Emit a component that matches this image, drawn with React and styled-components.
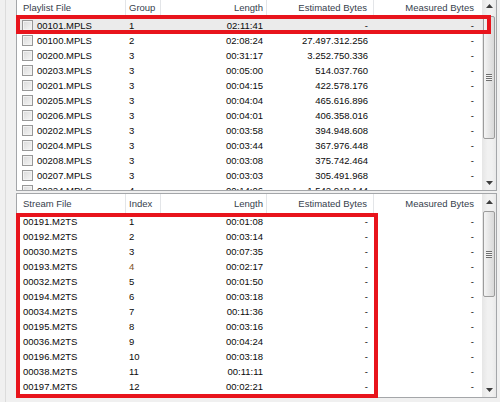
import React from 'react';
import styled, { createGlobalStyle } from 'styled-components';

const GlobalStyle = createGlobalStyle`
  html, body { margin: 0; padding: 0; background: #f0f0f0; }
  body {
    width: 500px; height: 402px; overflow: hidden;
    font-family: "Liberation Sans", Arial, sans-serif;
    font-size: 9.5px;
    color: #0a0a0a;
  }
  * { box-sizing: border-box; }
`;

const Frame = styled.div`
  margin-left: 5px;
  margin-top: -3px;
  border-left: 1px solid #dcdcdc;
  padding-left: 10px;
  padding-right: 3px;
  height: 410px;
  display: flex;
  flex-direction: column;
  gap: 2px;
`;

const ListView = styled.div`
  position: relative;
  flex: none;
  height: ${p => p.$h}px;
  border: 1px solid #a4a6a9;
  background: #fff;
  display: flex;
`;

const Body = styled.div`
  flex: 1;
  min-width: 0;
  overflow: hidden;
  display: flex;
  flex-direction: column;
`;

const GRID = '109px 35px 106px 107px 1fr';

const HeaderRow = styled.div`
  flex: none;
  display: grid;
  grid-template-columns: ${GRID};
  height: 20px;
  background: #fff;
`;

const HeaderCell = styled.div`
  line-height: 20px;
  color: #36404c;
  white-space: nowrap;
  overflow: hidden;
  text-align: ${p => p.$align};
  padding-left: ${p => p.$pl}px;
  padding-right: ${p => p.$pr}px;
  border-right: ${p => (p.$last ? 'none' : '1px solid #e3e5e8')};
`;

const Row = styled.div`
  flex: none;
  display: grid;
  grid-template-columns: ${GRID};
  height: 15px;
  background: ${p => (p.$selected ? '#ebebeb' : 'transparent')};
`;

const Cell = styled.div`
  display: flex;
  align-items: center;
  justify-content: ${p => (p.$align === 'right' ? 'flex-end' : 'flex-start')};
  line-height: 15px;
  white-space: nowrap;
  overflow: hidden;
  padding-left: ${p => p.$pl}px;
  padding-right: ${p => p.$pr}px;
  color: ${p => p.$tint || '#0a0a0a'};
`;

const Check = styled.span`
  flex: none;
  width: 11px;
  height: 11px;
  margin-right: 4px;
  border: 1px solid #979797;
  background: linear-gradient(135deg, #d9d9d9, #f6f6f6);
  box-shadow: inset 0 0 0 1px #f2f2f2;
`;

const ScrollBar = styled.div`
  flex: none;
  width: 14px;
  display: flex;
  flex-direction: column;
  background: linear-gradient(to right, #e6e6e6, #f1f1f1 40%, #f1f1f1 70%, #e9e9e9);
`;

const ArrowButton = styled.div`
  flex: none;
  height: 15px;
  display: flex;
  align-items: center;
  justify-content: center;
`;

const Track = styled.div`
  flex: 1;
  display: flex;
  flex-direction: column;
  padding-top: ${p => p.$offset}px;
`;

const Thumb = styled.div`
  flex: none;
  height: ${p => p.$h}px;
  margin: 0 1px;
  border: 1px solid #9c9c9c;
  border-radius: 2px;
  background: linear-gradient(to right, #f4f4f4, #e6e6e6 50%, #d9d9d9);
  display: flex;
  align-items: center;
  justify-content: center;
`;

const Grip = styled.span`
  width: 6px;
  height: 7px;
  background: repeating-linear-gradient(to bottom, #6f6f6f 0 1px, #f4f4f4 1px 2px);
`;

const Highlight = styled.div`
  position: absolute;
  pointer-events: none;
  border: 4px solid #e8141c;
  left: ${p => p.$l}px;
  top: ${p => p.$t}px;
  width: ${p => p.$w}px;
  height: ${p => p.$hh}px;
`;

const cols = [
  { align: 'left', pl: 6, pr: 0 },
  { align: 'left', pl: 3, pr: 0 },
  { align: 'right', pl: 0, pr: 4 },
  { align: 'right', pl: 0, pr: 6 },
  { align: 'right', pl: 0, pr: 8 },
];

const Arrow = ({ down }) => (
  <svg width="7" height="4" viewBox="0 0 7 4">
    <polygon points={down ? '0,0 7,0 3.5,4' : '0,4 7,4 3.5,0'} fill="#3d3d3d" />
  </svg>
);

const Scroller = ({ offset, thumb }) => (
  <ScrollBar>
    <ArrowButton><Arrow /></ArrowButton>
    <Track $offset={offset}>
      <Thumb $h={thumb}><Grip /></Thumb>
    </Track>
    <ArrowButton><Arrow down /></ArrowButton>
  </ScrollBar>
);

const Header = ({ titles }) => (
  <HeaderRow>
    {titles.map((t, i) => (
      <HeaderCell
        key={t}
        $align={cols[i].align}
        $pl={cols[i].pl}
        $pr={i === 2 ? 3 : cols[i].pr}
        $last={i === titles.length - 1}
      >
        {t}
      </HeaderCell>
    ))}
  </HeaderRow>
);

const playlists = [
  ['00101.MPLS', '1', '02:11:41', '-', '-'],
  ['00100.MPLS', '2', '02:08:24', '27.497.312.256', '-'],
  ['00200.MPLS', '3', '00:31:17', '3.252.750.336', '-'],
  ['00203.MPLS', '3', '00:05:00', '514.037.760', '-'],
  ['00201.MPLS', '3', '00:04:15', '422.578.176', '-'],
  ['00205.MPLS', '3', '00:04:04', '465.616.896', '-'],
  ['00206.MPLS', '3', '00:04:01', '406.358.016', '-'],
  ['00202.MPLS', '3', '00:03:58', '394.948.608', '-'],
  ['00204.MPLS', '3', '00:03:44', '367.976.448', '-'],
  ['00208.MPLS', '3', '00:03:08', '375.742.464', '-'],
  ['00207.MPLS', '3', '00:03:03', '305.491.968', '-'],
  ['00224.MPLS', '4', '00:14:06', '1.542.918.144', '-'],
];

const streams = [
  ['00191.M2TS', '1', '00:01:08'],
  ['00192.M2TS', '2', '00:03:14'],
  ['00030.M2TS', '3', '00:07:35'],
  ['00193.M2TS', '4', '00:02:17'],
  ['00032.M2TS', '5', '00:01:50'],
  ['00194.M2TS', '6', '00:03:18'],
  ['00034.M2TS', '7', '00:11:36'],
  ['00195.M2TS', '8', '00:03:16'],
  ['00036.M2TS', '9', '00:04:24'],
  ['00196.M2TS', '10', '00:03:18'],
  ['00038.M2TS', '11', '00:11:11'],
  ['00197.M2TS', '12', '00:02:21'],
].map(r => [...r, '-', '-']);

export default function App() {
  return (
    <>
      <GlobalStyle />
      <Frame>
        <ListView $h={194}>
          <Body>
            <Header titles={['Playlist File', 'Group', 'Length', 'Estimated Bytes', 'Measured Bytes']} />
            {playlists.map((r, ri) => (
              <Row key={r[0]} $selected={ri === 0}>
                {r.map((v, i) => (
                  <Cell key={i} $align={cols[i].align} $pl={i === 0 ? 5 : cols[i].pl} $pr={cols[i].pr}>
                    {i === 0 && <Check />}
                    {v}
                  </Cell>
                ))}
              </Row>
            ))}
          </Body>
          <Scroller offset={3} thumb={123} />
          <Highlight $l={-1} $t={17} $w={475} $hh={19} />
        </ListView>
        <ListView $h={205}>
          <Body>
            <Header titles={['Stream File', 'Index', 'Length', 'Estimated Bytes', 'Measured Bytes']} />
            {streams.map(r => (
              <Row key={r[0]}>
                {r.map((v, i) => (
                  <Cell
                    key={i}
                    $align={cols[i].align}
                    $pl={cols[i].pl}
                    $pr={cols[i].pr}
                    $tint={i === 1 && v === '4' ? '#7d5326' : undefined}
                  >
                    {v}
                  </Cell>
                ))}
              </Row>
            ))}
          </Body>
          <Scroller offset={2} thumb={86} />
          <Highlight $l={-1} $t={19} $w={362} $hh={185} />
        </ListView>
      </Frame>
    </>
  );
}
